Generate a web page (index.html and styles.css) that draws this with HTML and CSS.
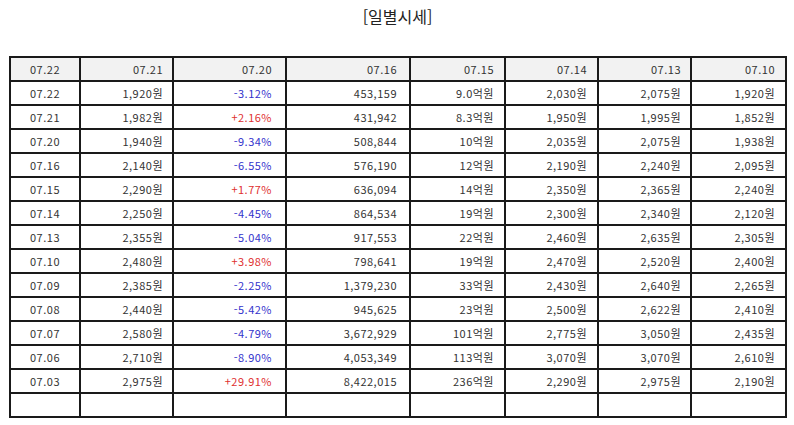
FILE: index.html
```html
<!DOCTYPE html>
<html lang="ko">
<head>
<meta charset="utf-8">
<link rel="stylesheet" href="styles.css">
</head>
<body>
<h1 class="title">[일별시세]</h1>
<table class="quotes">
<colgroup>
<col class="c1"><col class="c2"><col class="c3"><col class="c4"><col class="c5"><col class="c6"><col class="c7"><col class="c8">
</colgroup>
<thead>
<tr><th>07.22</th><th>07.21</th><th>07.20</th><th>07.16</th><th>07.15</th><th>07.14</th><th>07.13</th><th>07.10</th></tr>
</thead>
<tbody>
<tr><td>07.22</td><td>1,920원</td><td class="down">-3.12%</td><td>453,159</td><td>9.0억원</td><td>2,030원</td><td>2,075원</td><td>1,920원</td></tr>
<tr><td>07.21</td><td>1,982원</td><td class="up">+2.16%</td><td>431,942</td><td>8.3억원</td><td>1,950원</td><td>1,995원</td><td>1,852원</td></tr>
<tr><td>07.20</td><td>1,940원</td><td class="down">-9.34%</td><td>508,844</td><td>10억원</td><td>2,035원</td><td>2,075원</td><td>1,938원</td></tr>
<tr><td>07.16</td><td>2,140원</td><td class="down">-6.55%</td><td>576,190</td><td>12억원</td><td>2,190원</td><td>2,240원</td><td>2,095원</td></tr>
<tr><td>07.15</td><td>2,290원</td><td class="up">+1.77%</td><td>636,094</td><td>14억원</td><td>2,350원</td><td>2,365원</td><td>2,240원</td></tr>
<tr><td>07.14</td><td>2,250원</td><td class="down">-4.45%</td><td>864,534</td><td>19억원</td><td>2,300원</td><td>2,340원</td><td>2,120원</td></tr>
<tr><td>07.13</td><td>2,355원</td><td class="down">-5.04%</td><td>917,553</td><td>22억원</td><td>2,460원</td><td>2,635원</td><td>2,305원</td></tr>
<tr><td>07.10</td><td>2,480원</td><td class="up">+3.98%</td><td>798,641</td><td>19억원</td><td>2,470원</td><td>2,520원</td><td>2,400원</td></tr>
<tr><td>07.09</td><td>2,385원</td><td class="down">-2.25%</td><td>1,379,230</td><td>33억원</td><td>2,430원</td><td>2,640원</td><td>2,265원</td></tr>
<tr><td>07.08</td><td>2,440원</td><td class="down">-5.42%</td><td>945,625</td><td>23억원</td><td>2,500원</td><td>2,622원</td><td>2,410원</td></tr>
<tr><td>07.07</td><td>2,580원</td><td class="down">-4.79%</td><td>3,672,929</td><td>101억원</td><td>2,775원</td><td>3,050원</td><td>2,435원</td></tr>
<tr><td>07.06</td><td>2,710원</td><td class="down">-8.90%</td><td>4,053,349</td><td>113억원</td><td>3,070원</td><td>3,070원</td><td>2,610원</td></tr>
<tr><td>07.03</td><td>2,975원</td><td class="up">+29.91%</td><td>8,422,015</td><td>236억원</td><td>2,290원</td><td>2,975원</td><td>2,190원</td></tr>
<tr><td></td><td></td><td></td><td></td><td></td><td></td><td></td><td></td></tr>
</tbody>
</table>
</body>
</html>
```

FILE: styles.css
```css
html, body {
  margin: 0;
  padding: 0;
  background: #fff;
}
body {
  padding: 0 8px 0 9px;
  font-family: "Noto Sans CJK KR", "Noto Sans", sans-serif;
  color: #333;
}
.title {
  margin: 0;
  padding-top: 5px;
  height: 56px;
  box-sizing: border-box;
  text-align: center;
  font-size: 16px;
  font-weight: normal;
  line-height: 22px;
  color: #222;
}
.quotes {
  width: 776px;
  border-collapse: collapse;
  table-layout: fixed;
  font-size: 11px;
}
.c1 { width: 70px; }
.c2 { width: 93px; }
.c3 { width: 113px; }
.c4 { width: 124px; }
.c5 { width: 95px; }
.c6 { width: 93px; }
.c7 { width: 93px; }
.c8 { width: 95px; }
.quotes th,
.quotes td {
  border: 2px solid #1a1a1a;
  height: 22px;
  padding: 0 9px 0 4px;
  text-align: right;
  font-weight: normal;
  line-height: 14px;
  white-space: nowrap;
  letter-spacing: 0.5px;
}
.quotes th:nth-child(3),
.quotes td:nth-child(3) {
  padding-right: 13px;
}
.quotes th:nth-child(4),
.quotes td:nth-child(4) {
  padding-right: 12px;
}
.quotes th:nth-child(5),
.quotes td:nth-child(5),
.quotes th:nth-child(6),
.quotes td:nth-child(6),
.quotes th:nth-child(8),
.quotes td:nth-child(8) {
  padding-right: 10px;
}
.quotes th:first-child,
.quotes td:first-child {
  text-align: center;
  padding: 0;
}
.quotes th {
  background: #f2f2f2;
}
.quotes td.down { color: #3333cc; }
.quotes td.up { color: #e03030; }
```
